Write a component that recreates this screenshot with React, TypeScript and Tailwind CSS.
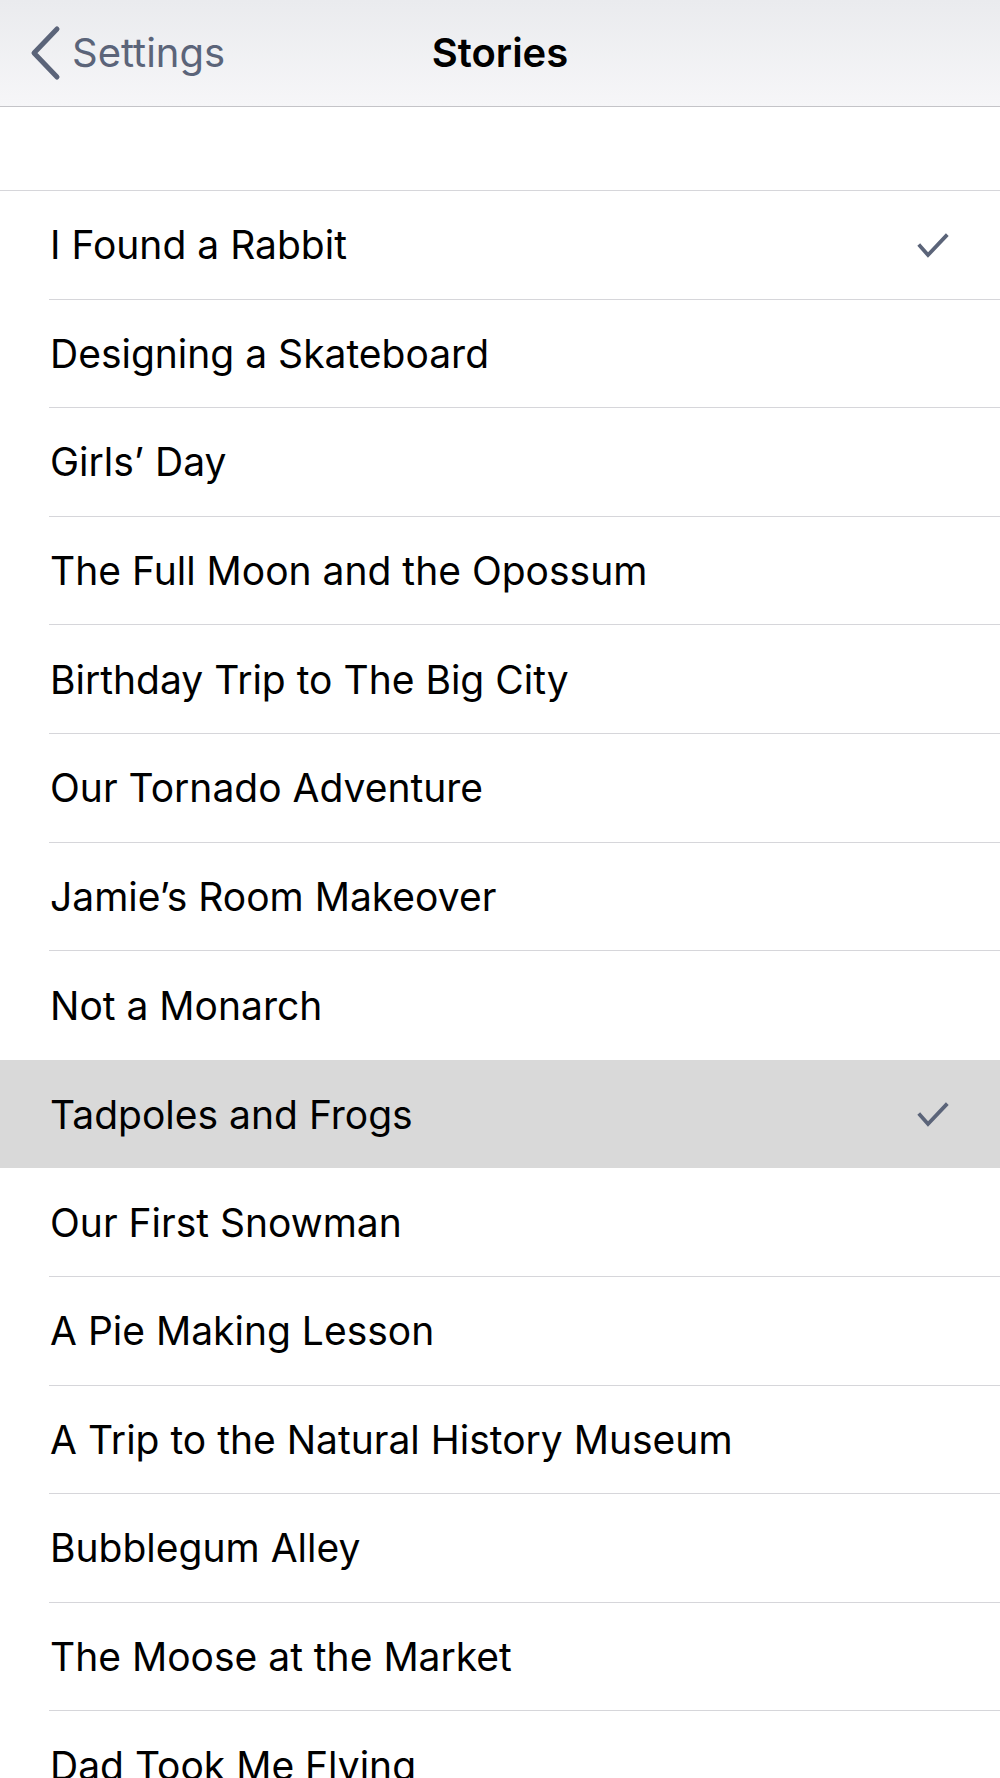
import React from "react";

const STORIES = [
  "I Found a Rabbit",
  "Designing a Skateboard",
  "Girls’ Day",
  "The Full Moon and the Opossum",
  "Birthday Trip to The Big City",
  "Our Tornado Adventure",
  "Jamie’s Room Makeover",
  "Not a Monarch",
  "Tadpoles and Frogs",
  "Our First Snowman",
  "A Pie Making Lesson",
  "A Trip to the Natural History Museum",
  "Bubblegum Alley",
  "The Moose at the Market",
  "Dad Took Me Flying",
];

const CHECKED = [0, 8];
const HIGHLIGHTED = 8;

function Check() {
  return (
    <svg width="34" height="30" viewBox="0 0 34 30" fill="none" className="shrink-0">
      <path d="M4 16 L12 25 L30 6" stroke="#5b6479" strokeWidth="3.8" strokeLinecap="square" strokeLinejoin="miter" />
    </svg>
  );
}

function Chevron() {
  return (
    <svg width="36" height="56" viewBox="0 0 36 56" fill="none" className="shrink-0">
      <path d="M29 4 L6 28 L29 52" stroke="#5b6479" strokeWidth="5" strokeLinecap="round" strokeLinejoin="round" />
    </svg>
  );
}

export default function App() {
  return (
    <div
      className="h-[1778px] w-[1000px] overflow-hidden bg-white"
      style={{ fontFamily: "Inter, 'Noto Sans', sans-serif" }}
    >
      {/* nav bar */}
      <header className="relative flex h-[107px] items-center border-b border-[#c4c4c8] bg-gradient-to-b from-[#eaebee] to-[#f6f6f8]">
        <div className="flex items-center pl-[28px]">
          <Chevron />
          <span className="ml-[8px] text-[40px] leading-none text-[#5b6479]">Settings</span>
        </div>
        <h1 className="absolute left-1/2 -translate-x-1/2 text-[40px] font-semibold leading-none text-black">
          Stories
        </h1>
      </header>

      {/* spacer */}
      <div className="h-[84px] border-b border-[#d6d6da]" />

      <ul>
        {STORIES.map((title, i) => {
          const hl = i === HIGHLIGHTED;
          const beforeHl = i === HIGHLIGHTED - 1;
          return (
            <li key={title} className={`h-[108.6px] ${hl ? "bg-[#d9d9d9]" : "bg-white"}`}>
              <div
                className={`ml-[49px] flex h-full items-center justify-between pr-[50px] ${
                  hl || beforeHl ? "" : "border-b border-[#d6d6da]"
                }`}
              >
                <span className="pl-[1px] text-[39px] leading-none text-black">{title}</span>
                {CHECKED.includes(i) && <Check />}
              </div>
            </li>
          );
        })}
      </ul>
    </div>
  );
}
